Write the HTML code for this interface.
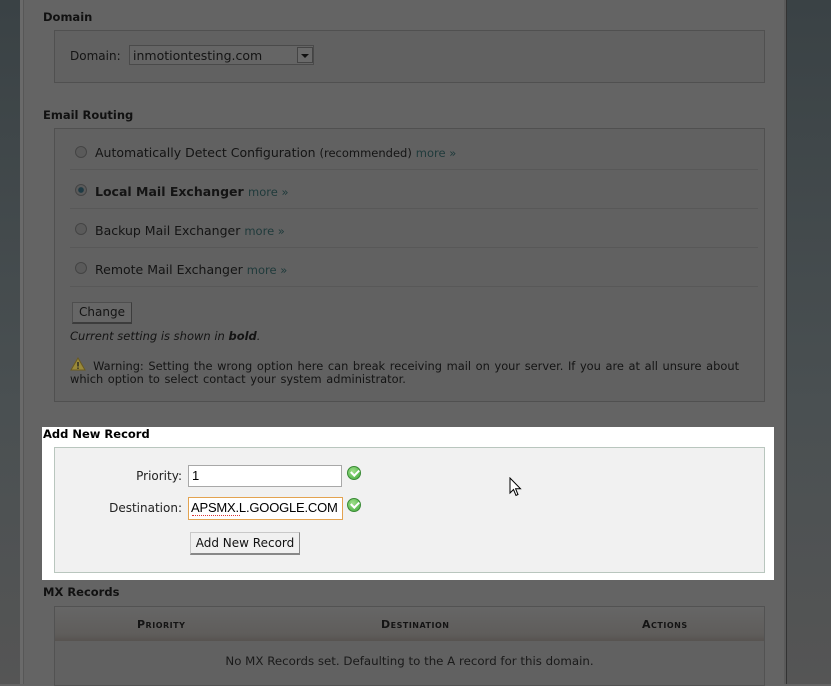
<!DOCTYPE html>
<html><head><style>
*{margin:0;padding:0;box-sizing:border-box}
body{width:831px;height:684px;overflow:hidden;position:relative;background:#646464;font-family:"DejaVu Sans","Liberation Sans",sans-serif;color:#141414}
.a{position:absolute}
.l{background:linear-gradient(#3a4245,#4a5052 60%,#555 100%)}
.h{font-size:11.5px;font-weight:bold;color:#111}
.fs{border:1px solid #505050;background:#616161}
.t{font-size:12.5px;white-space:nowrap}
.m{color:#1f3a3b;font-size:11.5px}
.sep{height:1px;background:#585858}
.rad{width:12px;height:12px;border-radius:50%;border:1px solid #444;background:#5a5a5a}
.btn{border:1px solid #4e4e4e;border-right-color:#3c3c3c;border-bottom:2px solid #3c3c3c;background:#666;font-size:12px;text-align:center}
.ok{width:14px;height:14px;border-radius:50%;background:radial-gradient(circle at 40% 35%,#9fe08a,#3fa83a);border:1px solid #3a8a36}
.ok:after{content:"";position:absolute;left:3px;top:2px;width:6px;height:4px;border-left:2px solid #fff;border-bottom:2px solid #fff;transform:rotate(-45deg)}
.sc{font-size:11px;font-weight:bold;font-variant:small-caps;letter-spacing:.5px}
</style></head><body>
<div class="a l" style="left:0;top:0;width:20px;height:684px"></div>
<div class="a" style="left:20px;top:0;width:3px;height:684px;background:#6a6a6a"></div>
<div class="a" style="left:23px;top:0;width:1px;height:684px;background:#575757"></div>
<div class="a" style="left:784px;top:0;width:2px;height:684px;background:#5a5a5a"></div>
<div class="a l" style="left:786px;top:0;width:45px;height:684px;border-left:1px solid #333"></div>

<div class="a h" style="left:43px;top:10px">Domain</div>
<div class="a fs" style="left:54px;top:30px;width:711px;height:53px"></div>
<div class="a t" style="left:70px;top:49px;font-size:12px">Domain:</div>
<div class="a" style="left:129px;top:45px;width:185px;height:20px;border:1px solid #4a4a4a;background:#656565"></div>
<div class="a t" style="left:133px;top:48px;font-size:12.5px">inmotiontesting.com</div>
<div class="a" style="left:297px;top:47px;width:16px;height:16px;border:1px solid #444;background:#6a6a6a"></div>
<div class="a" style="left:301px;top:54px;border:4px solid transparent;border-top:4px solid #111"></div>

<div class="a h" style="left:43px;top:108px">Email Routing</div>
<div class="a fs" style="left:54px;top:128px;width:711px;height:274px"></div>
<div class="a rad" style="left:75px;top:146px"></div>
<div class="a t" style="left:95px;top:145px">Automatically Detect Configuration <span style="font-size:11.5px">(recommended)</span> <span class="m">more »</span></div>
<div class="a sep" style="left:70px;top:169px;width:688px"></div>
<div class="a rad" style="left:75px;top:184px;background:radial-gradient(circle,#1f3a44 35%,#5a5a5a 45%)"></div>
<div class="a t" style="left:95px;top:184px;font-weight:bold">Local Mail Exchanger <span class="m" style="font-weight:normal">more »</span></div>
<div class="a sep" style="left:70px;top:208px;width:688px"></div>
<div class="a rad" style="left:75px;top:223px"></div>
<div class="a t" style="left:95px;top:223px">Backup Mail Exchanger <span class="m">more »</span></div>
<div class="a sep" style="left:70px;top:247px;width:688px"></div>
<div class="a rad" style="left:75px;top:262px"></div>
<div class="a t" style="left:95px;top:262px">Remote Mail Exchanger <span class="m">more »</span></div>
<div class="a sep" style="left:70px;top:286px;width:688px"></div>
<div class="a btn" style="left:72px;top:302px;width:60px;height:22px;line-height:19px">Change</div>
<div class="a t" style="left:70px;top:329px;font-size:11.5px;font-style:italic">Current setting is shown in <b>bold</b>.</div>
<svg class="a" style="left:70px;top:357px" width="16" height="14"><path d="M8 1 L15 13 H1 Z" fill="#9a8a3a" stroke="#6a5a20"/><rect x="7.3" y="5" width="1.4" height="4.5" fill="#222"/><rect x="7.3" y="10.5" width="1.4" height="1.4" fill="#222"/></svg>
<div class="a" style="left:70px;top:360px;font-size:11.4px;line-height:13px;width:670px;word-spacing:1px">&nbsp;&nbsp;&nbsp;&nbsp;&nbsp;Warning: Setting the wrong option here can break receiving mail on your server. If you are at all unsure about<br>which option to select contact your system administrator.</div>

<div class="a" style="left:42px;top:427px;width:732px;height:153px;background:#fff"></div>
<div class="a h" style="left:43px;top:427px;color:#000">Add New Record</div>
<div class="a" style="left:54px;top:447px;width:711px;height:126px;background:#f1f1f1;border:1px solid #b9c6be"></div>
<div class="a t" style="left:100px;top:469px;width:82px;text-align:right;font-size:12px;color:#222">Priority:</div>
<div class="a" style="left:188px;top:465px;width:154px;height:22px;border:1px solid #a8a8a8;background:#fff"></div>
<div class="a t" style="left:192px;top:468px;font-family:'Liberation Sans',sans-serif;font-size:13px;color:#000">1</div>
<div class="a ok" style="left:347px;top:466px"></div>
<div class="a t" style="left:80px;top:501px;width:102px;text-align:right;font-size:12px;color:#222">Destination:</div>
<div class="a" style="left:188px;top:497px;width:155px;height:23px;border:1px solid #e3a350;background:#fff"></div>
<div class="a t" style="left:191px;top:500px;font-family:'Liberation Sans',sans-serif;font-size:13px;color:#000;letter-spacing:-.2px">APSMX.L.GOOGLE.COM</div>
<div class="a" style="left:192px;top:515px;width:48px;border-bottom:1px dotted #d33"></div>
<div class="a ok" style="left:347px;top:498px"></div>
<div class="a btn" style="left:190px;top:532px;width:110px;height:23px;line-height:20px;background:#f0f0f0;border-color:#c8c8c8 #888 #888 #c8c8c8;color:#111">Add New Record</div>

<div class="a h" style="left:43px;top:585px">MX Records</div>
<div class="a" style="left:54px;top:606px;width:711px;height:80px;border:1px solid #525252;background:#616161"></div>
<div class="a" style="left:55px;top:607px;width:709px;height:34px;background:linear-gradient(#666,#5f5d5b 80%,#575350)"></div>
<div class="a sc" style="left:137px;top:618px">Priority</div>
<div class="a sc" style="left:381px;top:618px">Destination</div>
<div class="a sc" style="left:642px;top:618px">Actions</div>
<div class="a t" style="left:55px;top:654px;width:709px;text-align:center;font-size:11.8px;color:#1a1a1a">No MX Records set. Defaulting to the A record for this domain.</div>

<svg class="a" style="left:509px;top:477px" width="14" height="20"><path d="M1 1 V16 L4.5 12.5 L7 18.5 L9 17.5 L6.6 11.8 H11.5 Z" fill="#fff" stroke="#000" stroke-width="1"/></svg>
</body></html>
